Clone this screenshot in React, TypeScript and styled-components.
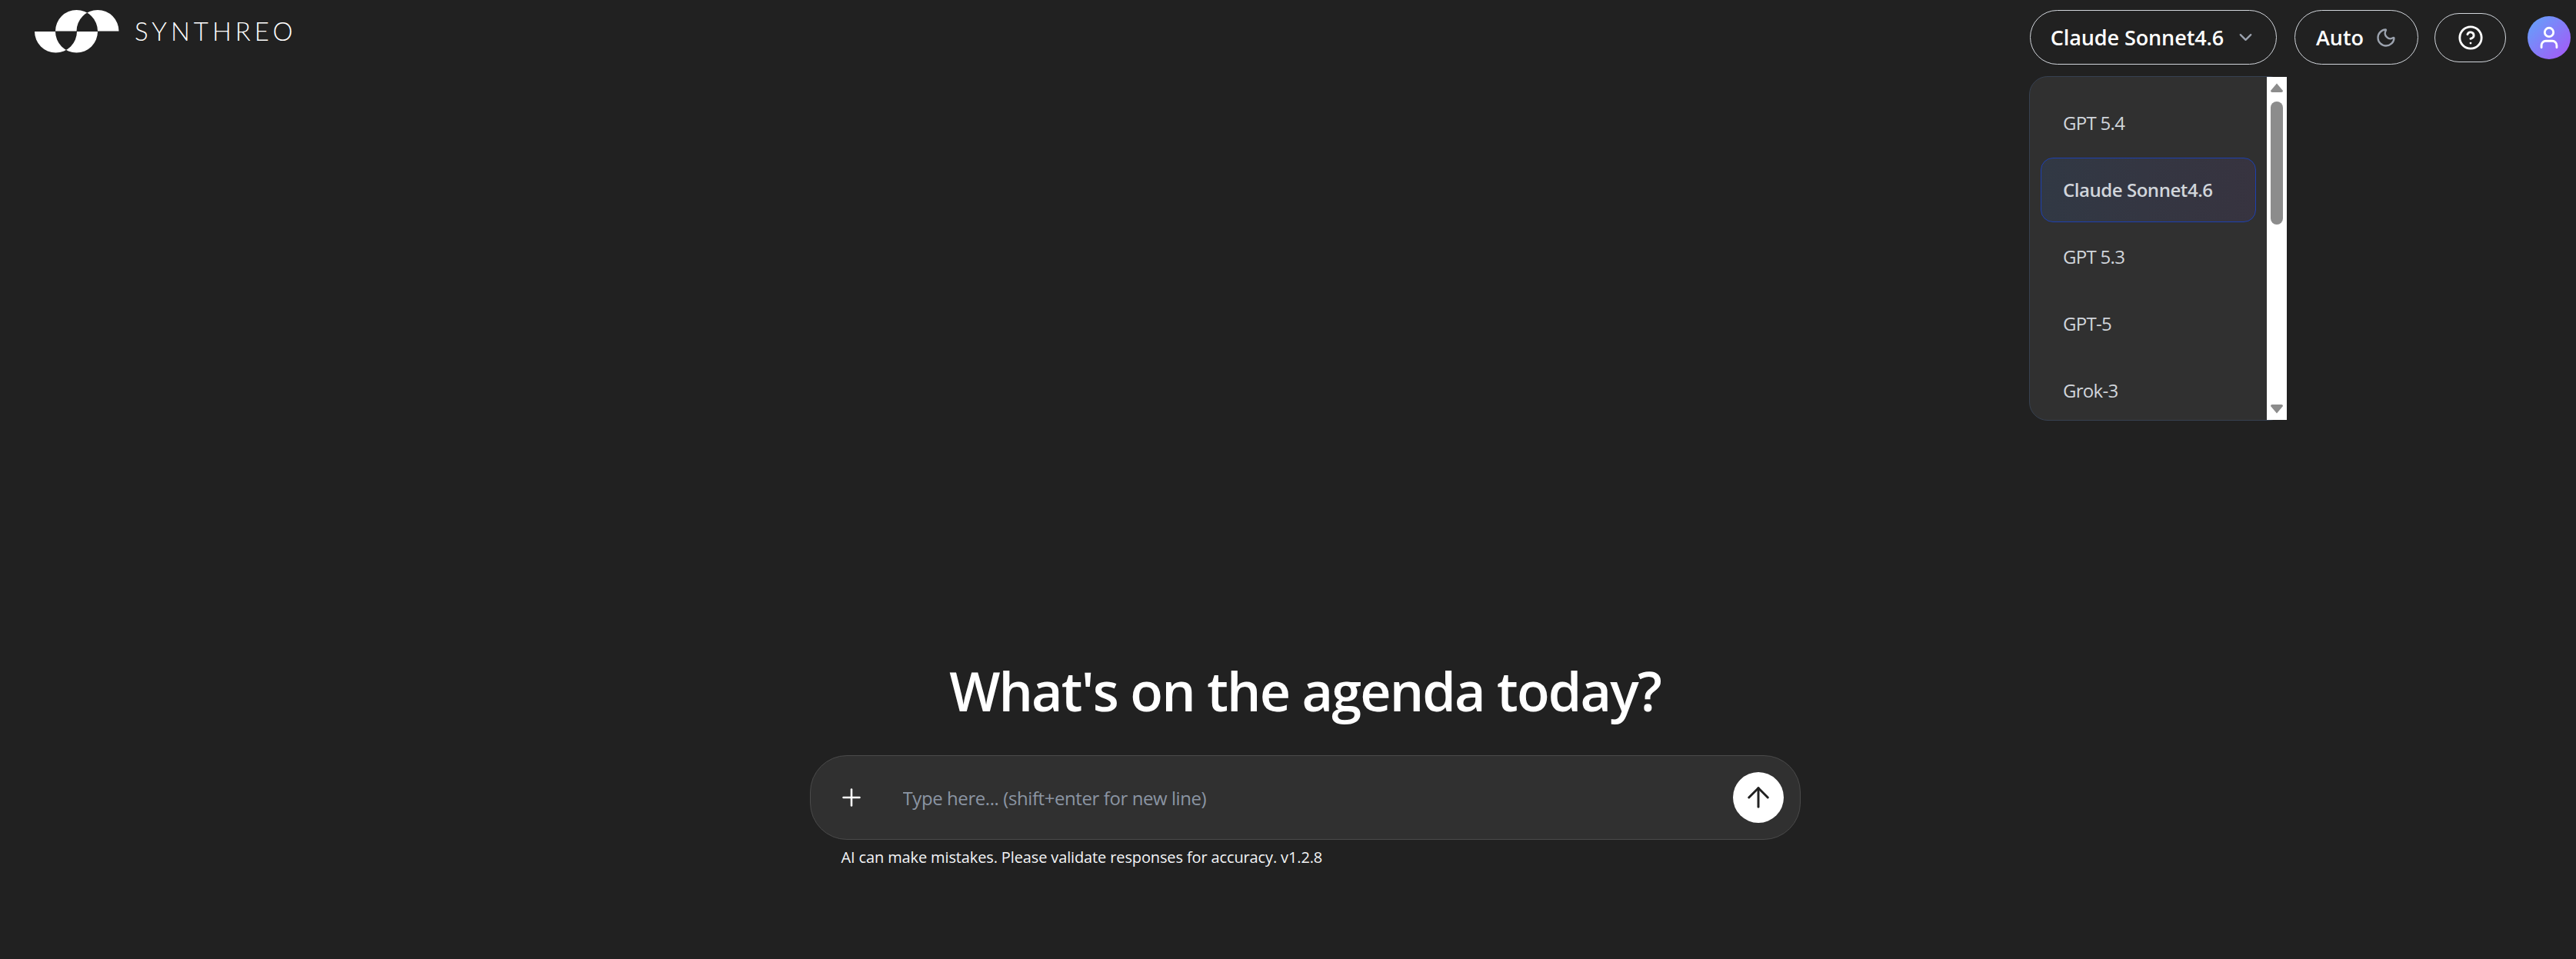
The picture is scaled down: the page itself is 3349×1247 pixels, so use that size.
import React from "react";
import styled, { createGlobalStyle } from "styled-components";
import { ArrowUp, ChevronDown, CircleHelp, Moon, Plus, User } from "lucide-react";

const Global = createGlobalStyle`
  html, body { margin: 0; padding: 0; background: #212121; }
  * { box-sizing: border-box; }
  body { font-family: "Open Sans", "Noto Sans", "Liberation Sans", sans-serif; }
`;

const Page = styled.div`
  width: 100%;
  height: 100vh;
  background: #212121;
  color: #fff;
  display: flex;
  flex-direction: column;
  overflow: hidden;
`;

const Header = styled.header`
  height: 98px;
  padding: 13px 7px 0 45px;
  display: flex;
  justify-content: space-between;
  align-items: flex-start;
`;

const Brand = styled.div`
  display: flex;
  align-items: center;
  gap: 20px;
  height: 55px;
`;

const Wordmark = styled.span`
  font-family: Lato, "Open Sans", sans-serif;
  font-weight: 300;
  font-size: 33px;
  letter-spacing: 5px;
  line-height: 55px;
  color: #fff;
`;

const Actions = styled.div`
  display: flex;
  align-items: center;
  height: 71px;
`;

const Pill = styled.div<{ $w: number; $h?: number; $ml?: number }>`
  width: ${(p) => p.$w}px;
  height: ${(p) => p.$h ?? 71}px;
  margin-left: ${(p) => p.$ml ?? 0}px;
  border: 1.5px solid #d1d5db;
  border-radius: 36px;
  display: flex;
  align-items: center;
  justify-content: center;
  gap: 15px;
  font-size: 27px;
  font-weight: 600;
  letter-spacing: -0.1px;
  color: #fff;
`;

const ModelSelect = styled.div`
  position: relative;
`;

const Menu = styled.div`
  position: absolute;
  top: 86px;
  left: -1px;
  width: 335px;
  height: 448px;
  background: #303030;
  border: 1px solid #374151;
  border-radius: 24px;
  display: flex;
  z-index: 2;
`;

const MenuList = styled.ul`
  list-style: none;
  flex: 1;
  margin: 0;
  padding: 18px 14px 0 14px;
  display: flex;
  flex-direction: column;
  gap: 3px;
  overflow: hidden;
`;

const MenuItem = styled.li<{ $active?: boolean }>`
  flex: 0 0 84px;
  display: flex;
  align-items: center;
  padding: 0 0 2px 28px;
  border: 1px solid ${(p) => (p.$active ? "#1e40af" : "transparent")};
  border-radius: 16px;
  font-size: 24px;
  font-weight: ${(p) => (p.$active ? 600 : 400)};
  letter-spacing: ${(p) => (p.$active ? "-0.45px" : "-0.7px")};
  color: #d1d5db;
  background: ${(p) =>
    p.$active
      ? "linear-gradient(90deg, rgba(59,130,246,0.1), rgba(139,92,246,0.08))"
      : "transparent"};
`;

const Rail = styled.div`
  flex: 0 0 26px;
  margin-right: -1px;
  background: #fff;
  display: flex;
  flex-direction: column;
  align-items: center;
  padding: 8px 0;
`;

const Thumb = styled.div`
  width: 16px;
  height: 160px;
  margin-top: 12px;
  background: #8c8c8c;
  border-radius: 8px;
`;

const RailArrow = styled.svg<{ $end?: boolean }>`
  display: block;
  width: 16px;
  height: 12px;
  margin-top: ${(p) => (p.$end ? "auto" : "0")};
`;

const Avatar = styled.div`
  width: 56px;
  height: 56px;
  margin-left: 28px;
  border-radius: 50%;
  background: linear-gradient(135deg, #60a5fa, #a855f7);
  display: flex;
  align-items: center;
  justify-content: center;
  color: #fff;
`;

const Main = styled.main`
  flex: 1;
  padding: 756px 0 0 44px;
  display: flex;
  flex-direction: column;
  align-items: center;
`;

const Column = styled.div`
  width: 1288px;
  display: flex;
  flex-direction: column;
`;

const Title = styled.h1`
  margin: 0;
  height: 128px;
  text-align: center;
  font-size: 70px;
  line-height: 88px;
  font-weight: 600;
  letter-spacing: -1.85px;
  color: #fff;
`;

const Composer = styled.div`
  height: 110px;
  padding: 0 21px 0 23px;
  background: #303030;
  border: 1.5px solid #4a4a4a;
  border-radius: 48px;
  display: flex;
  align-items: center;
`;

const IconButton = styled.button`
  width: 60px;
  height: 60px;
  padding: 0;
  border: 0;
  background: transparent;
  color: #fff;
  display: flex;
  align-items: center;
  justify-content: center;
`;

const Field = styled.input`
  flex: 1;
  margin-left: 35px;
  background: transparent;
  border: 0;
  outline: 0;
  font-family: inherit;
  font-size: 24px;
  letter-spacing: -0.42px;
  color: #fff;
  &::placeholder { color: #8b95a3; opacity: 1; }
`;

const Send = styled.button`
  width: 66px;
  height: 66px;
  padding: 0;
  border: 0;
  border-radius: 50%;
  background: #fff;
  color: #212121;
  display: flex;
  align-items: center;
  justify-content: center;
`;

const Note = styled.p`
  margin: 9px 0 0 41px;
  font-size: 20px;
  line-height: 27px;
  letter-spacing: -0.13px;
  color: #f3f4f6;
`;

const Logo = () => (
  <svg width="110" height="56" viewBox="45 13 110 56" fill="#fff" aria-hidden="true">
    <path fillRule="evenodd" d="M72 40.5A27.5 27.5 0 0 1 127 40.5ZM99.5 40.5A27.5 27.5 0 0 1 154.5 40.5Z" />
    <path fillRule="evenodd" d="M45 41A27.5 27.5 0 0 0 100 41ZM72 41A27.5 27.5 0 0 0 127 41Z" />
  </svg>
);

const models = ["GPT 5.4", "Claude Sonnet4.6", "GPT 5.3", "GPT-5", "Grok-3"];

export default function App() {
  return (
    <Page>
      <Global />
      <Header>
        <Brand>
          <Logo />
          <Wordmark>SYNTHREO</Wordmark>
        </Brand>
        <Actions>
          <ModelSelect>
            <Pill $w={321}>
              Claude Sonnet4.6
              <ChevronDown size={27} color="#9ca3af" strokeWidth={2} />
            </Pill>
            <Menu>
              <MenuList>
                {models.map((m) => (
                  <MenuItem key={m} $active={m === "Claude Sonnet4.6"}>{m}</MenuItem>
                ))}
              </MenuList>
              <Rail>
                <RailArrow viewBox="0 0 16 12">
                  <path d="M8 0.5 L16 10 Q16 12 14 12 H2 Q0 12 0 10 Z" fill="#8c8c8c" />
                </RailArrow>
                <Thumb />
                <RailArrow $end viewBox="0 0 16 12">
                  <path d="M8 11.5 L16 2 Q16 0 14 0 H2 Q0 0 0 2 Z" fill="#8c8c8c" />
                </RailArrow>
              </Rail>
            </Menu>
          </ModelSelect>
          <Pill $w={161} $ml={23}>
            Auto
            <Moon size={28} color="#9ca3af" strokeWidth={2} />
          </Pill>
          <Pill $w={93} $h={64} $ml={21}>
            <CircleHelp size={34} color="#fff" strokeWidth={2} />
          </Pill>
          <Avatar>
            <User size={34} strokeWidth={2} />
          </Avatar>
        </Actions>
      </Header>
      <Main>
        <Column>
          <Title>What's on the agenda today?</Title>
          <Composer>
            <IconButton aria-label="Add">
              <Plus size={36} strokeWidth={1.7} />
            </IconButton>
            <Field placeholder="Type here... (shift+enter for new line)" readOnly />
            <Send aria-label="Send">
              <ArrowUp size={42} strokeWidth={1.7} />
            </Send>
          </Composer>
          <Note>AI can make mistakes. Please validate responses for accuracy. v1.2.8</Note>
        </Column>
      </Main>
    </Page>
  );
}
